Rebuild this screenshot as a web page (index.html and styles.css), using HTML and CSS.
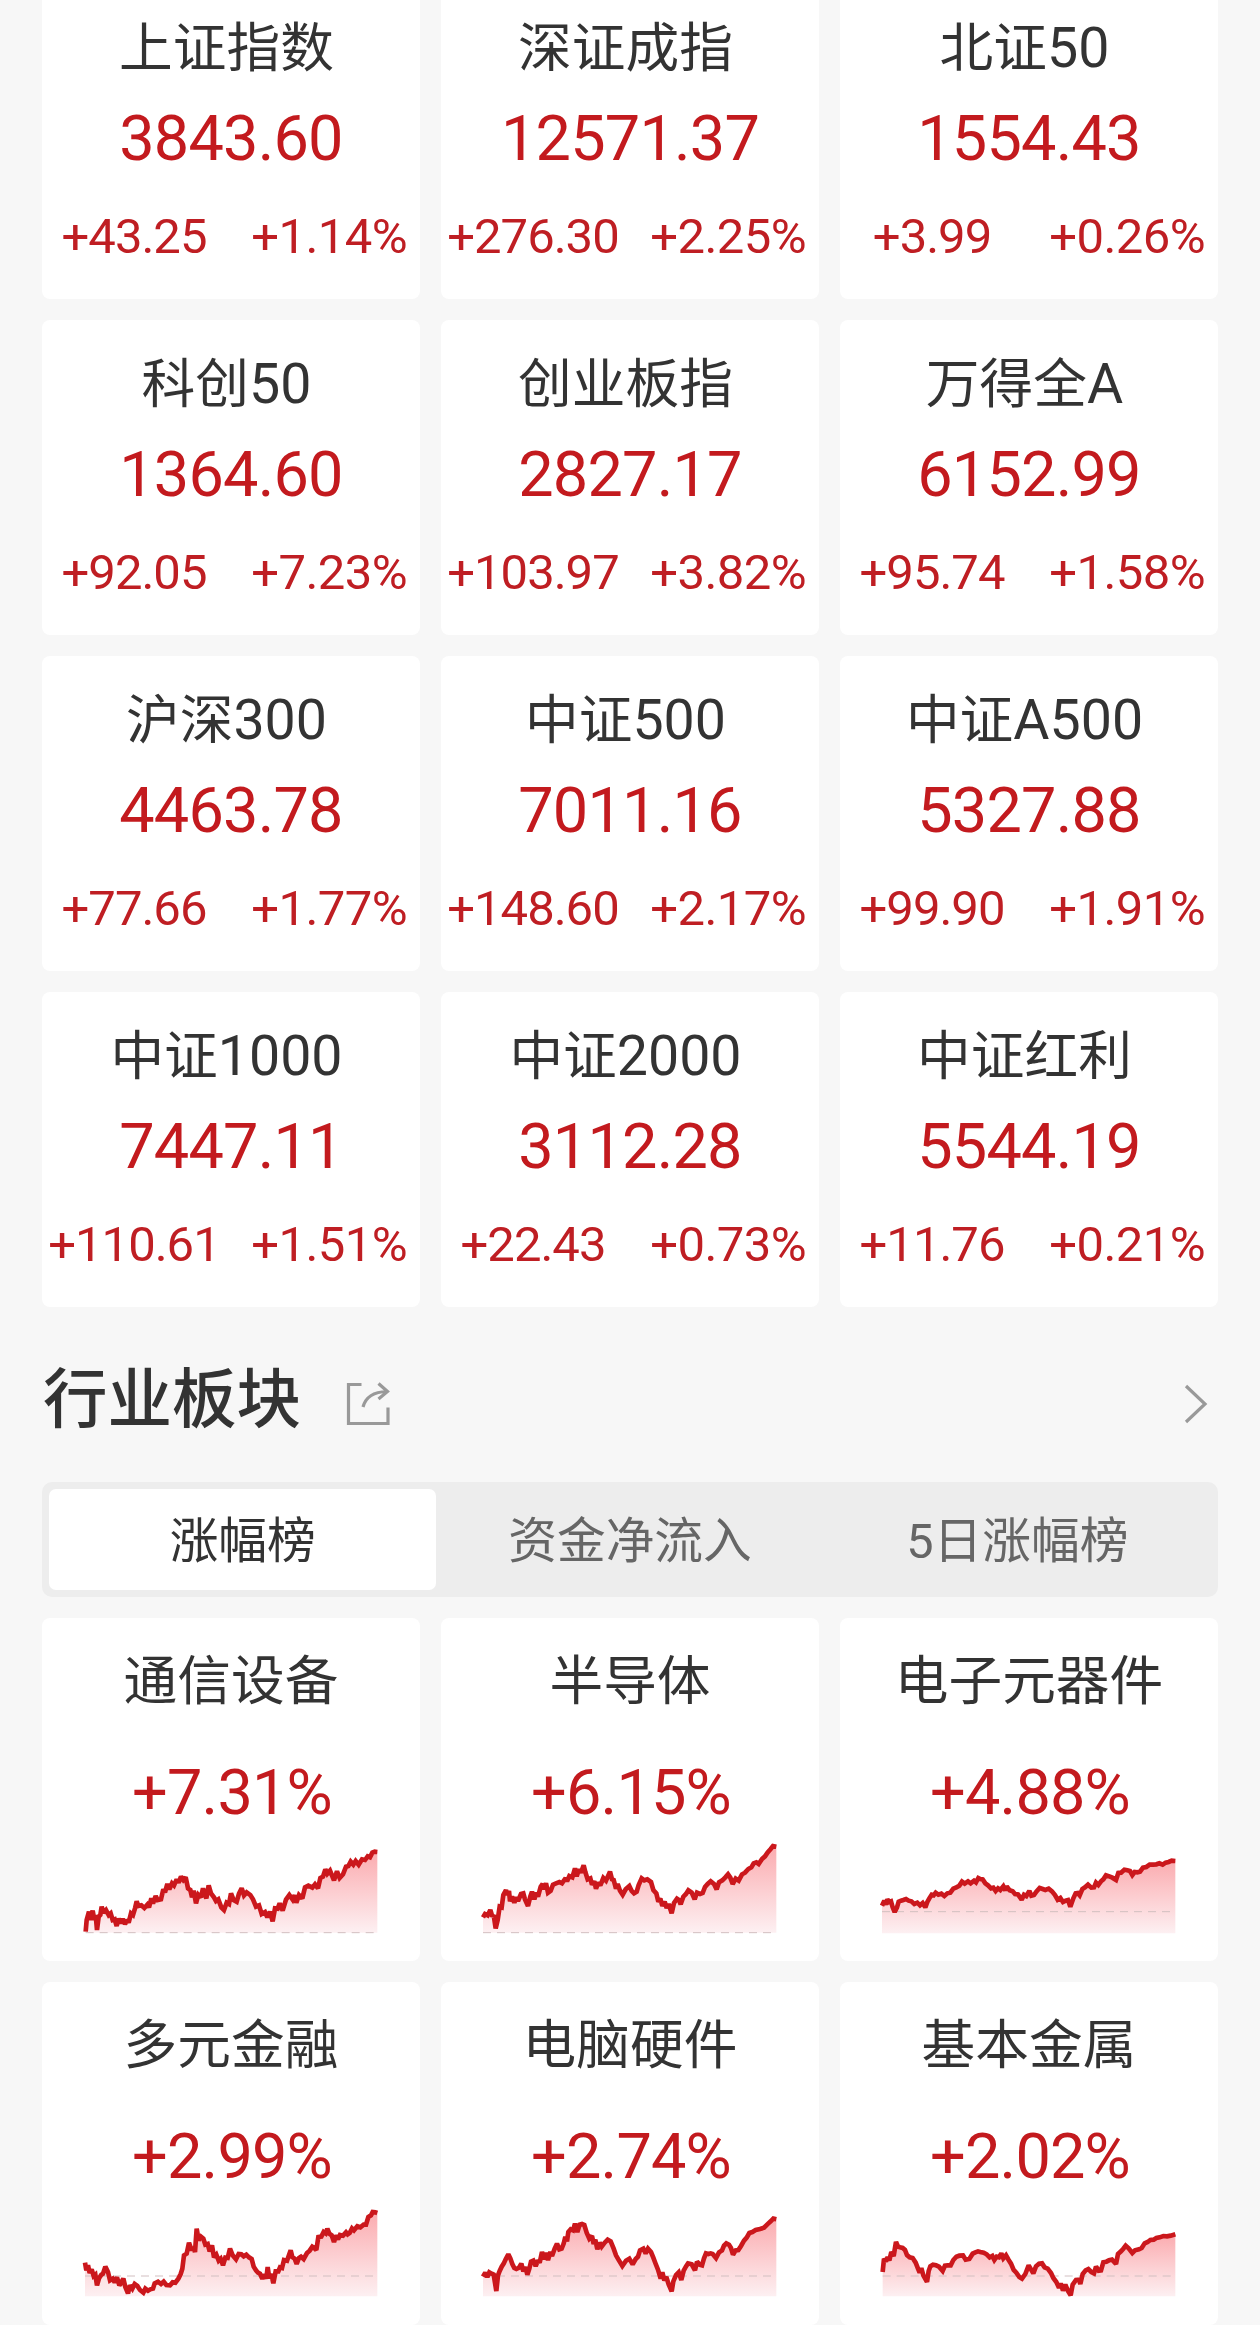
FILE: index.html
```html
<!DOCTYPE html>
<html lang="zh-CN">
<head>
<meta charset="utf-8">
<title>行情</title>
<link rel="stylesheet" href="styles.css">
</head>
<body>
<main class="page">
  <section class="grid indices">
    <article class="card index"><h3 class="name">上证指数</h3><p class="value">3843.60</p><p class="change"><span>+43.25</span><span>+1.14%</span></p></article>
    <article class="card index"><h3 class="name">深证成指</h3><p class="value">12571.37</p><p class="change"><span>+276.30</span><span>+2.25%</span></p></article>
    <article class="card index"><h3 class="name">北证<b>50</b></h3><p class="value">1554.43</p><p class="change"><span>+3.99</span><span>+0.26%</span></p></article>
    <article class="card index"><h3 class="name">科创<b>50</b></h3><p class="value">1364.60</p><p class="change"><span>+92.05</span><span>+7.23%</span></p></article>
    <article class="card index"><h3 class="name">创业板指</h3><p class="value">2827.17</p><p class="change"><span>+103.97</span><span>+3.82%</span></p></article>
    <article class="card index"><h3 class="name">万得全<b>A</b></h3><p class="value">6152.99</p><p class="change"><span>+95.74</span><span>+1.58%</span></p></article>
    <article class="card index"><h3 class="name">沪深<b>300</b></h3><p class="value">4463.78</p><p class="change"><span>+77.66</span><span>+1.77%</span></p></article>
    <article class="card index"><h3 class="name">中证<b>500</b></h3><p class="value">7011.16</p><p class="change"><span>+148.60</span><span>+2.17%</span></p></article>
    <article class="card index"><h3 class="name">中证<b>A500</b></h3><p class="value">5327.88</p><p class="change"><span>+99.90</span><span>+1.91%</span></p></article>
    <article class="card index"><h3 class="name">中证<b>1000</b></h3><p class="value">7447.11</p><p class="change"><span>+110.61</span><span>+1.51%</span></p></article>
    <article class="card index"><h3 class="name">中证<b>2000</b></h3><p class="value">3112.28</p><p class="change"><span>+22.43</span><span>+0.73%</span></p></article>
    <article class="card index"><h3 class="name">中证红利</h3><p class="value">5544.19</p><p class="change"><span>+11.76</span><span>+0.21%</span></p></article>
  </section>

  <header class="heading">
    <h2>行业板块</h2>
    <svg class="share" width="44" height="44" viewBox="0 0 44 44"><path d="M15.5 2.5H2.5V41.500H42V25.500M17 25Q21 10 41 9.500M32.500 1.500L41.500 9.500L32.500 17"/></svg>
    <svg class="chevron" width="24" height="40" viewBox="0 0 24 40"><path d="M2 2L21 20L2 38"/></svg>
  </header>

  <nav class="tabs"><span class="tab active">涨幅榜</span><span class="tab">资金净流入</span><span class="tab">5日涨幅榜</span></nav>

  <section class="grid sectors">
    <article class="card sector"><h3 class="name">通信设备</h3><p class="value">+7.31%</p>
      <svg class="spark" viewBox="3 0 1020 450" data-base="338" data-bottom="338" data-points="77,335 80,300 87,275 91,300 98,272 103,300 107,285 111,330 116,290 121,285 125,260 131,278 138,270 146,285 152,280 158,300 164,298 170,318 176,296 182,310 188,297 195,312 202,300 206,308 213,280 219,285 225,265 230,244 235,258 244,256 253,264 262,254 267,262 274,235 279,250 287,228 293,240 303,238 310,208 315,217 322,192 328,208 336,190 342,196 350,178 356,188 363,170 370,180 377,172 384,205 391,210 396,232 401,212 408,250 415,224 423,232 429,205 435,224 439,235 446,196 453,220 462,232 468,243 475,238 484,262 492,270 500,248 507,252 513,220 521,240 530,245 537,221 545,205 552,226 560,217 571,225 579,238 588,260 597,256 605,282 615,276 622,292 630,275 638,304 645,265 653,266 659,250 668,272 678,239 688,225 698,239 704,226 709,248 717,225 727,235 735,202 745,197 757,203 765,193 774,205 781,174 789,170 796,148 802,161 810,152 822,181 831,154 839,174 849,163 858,140 865,138 872,125 880,134 887,123 896,134 906,118 915,120 923,109 930,112 937,98 944,95 952,96"/></article>
    <article class="card sector"><h3 class="name">半导体</h3><p class="value">+6.15%</p>
      <svg class="spark" viewBox="0 0 1020 450" data-base="338" data-bottom="338" data-points="69,292 75,282 83,286 91,270 97,290 101,285 107,325 113,300 119,260 125,262 130,225 138,210 142,225 147,213 150,244 156,230 163,248 169,232 174,243 183,222 190,220 195,238 204,258 211,229 216,215 223,238 229,218 234,230 242,200 248,192 252,208 258,190 264,218 272,212 279,194 288,190 298,186 306,190 317,174 321,184 328,168 337,172 345,145 350,169 357,148 363,158 371,136 376,156 383,178 391,175 396,194 403,184 408,206 415,188 421,196 430,174 438,182 450,155 456,178 461,180 468,206 473,192 480,212 488,224 497,208 508,198 515,213 522,220 530,215 536,195 545,175 553,181 562,178 573,186 580,210 589,220 595,245 601,236 607,258 614,245 620,264 626,252 635,280 642,249 651,236 657,240 662,253 670,230 678,222 685,211 695,218 704,238 711,218 720,222 728,219 735,201 743,192 752,184 762,192 770,208 777,187 787,181 796,172 804,163 811,173 818,192 827,176 836,182 846,163 855,158 865,147 874,142 881,130 889,127 896,132 906,117 915,109 923,97 932,87 939,78 949,80"/></article>
    <article class="card sector"><h3 class="name">电子元器件</h3><p class="value">+4.88%</p>
      <svg class="spark" viewBox="-3 0 1020 450" data-base="275" data-bottom="340" data-points="66,257 73,242 78,254 82,238 88,246 93,244 98,262 104,276 111,262 116,245 123,242 130,240 138,237 146,242 154,244 163,252 172,248 180,256 188,249 196,262 202,246 208,235 215,224 221,226 227,218 235,224 244,221 253,228 262,220 271,218 280,206 289,202 298,197 306,185 314,191 324,184 332,190 342,182 348,187 355,174 361,177 368,178 376,190 384,196 393,205 400,203 407,213 414,205 421,210 430,199 436,211 440,199 449,211 458,214 465,222 474,223 485,239 492,224 499,228 508,213 514,227 522,225 529,215 539,204 548,207 556,210 566,206 576,214 585,225 593,239 601,234 609,246 617,242 624,240 631,260 640,235 647,220 653,219 659,226 667,207 675,202 684,194 694,203 702,202 708,188 715,195 723,184 730,178 738,166 748,169 757,173 768,180 775,159 783,158 793,149 802,151 810,153 817,165 824,156 832,157 840,155 849,143 859,141 869,134 879,134 889,133 898,130 908,134 917,128 926,126 935,122 946,123"/></article>
    <article class="card sector"><h3 class="name">多元金融</h3><p class="value">+2.99%</p>
      <svg class="spark" viewBox="3 -4 1020 450" data-base="272" data-bottom="333" data-points="75,232 79,255 84,240 89,263 95,252 101,272 106,268 111,300 117,279 124,268 129,265 136,244 144,260 150,285 158,280 164,291 171,276 178,300 184,292 190,280 196,305 204,324 210,300 217,310 224,296 232,302 240,314 250,322 256,310 264,316 271,312 279,310 284,294 294,289 303,296 311,289 319,299 330,300 338,291 346,292 355,280 362,266 367,250 372,210 380,205 387,172 395,195 400,185 405,200 410,130 416,165 423,154 430,160 436,178 443,176 449,198 456,180 462,216 469,208 476,226 482,220 489,240 496,217 503,218 510,190 518,210 528,222 536,206 544,207 551,213 559,208 567,216 575,221 581,244 588,255 594,262 600,265 607,280 614,268 619,280 623,245 628,279 634,266 640,294 647,258 655,258 660,246 666,248 672,224 681,226 692,195 697,215 704,220 710,236 717,218 723,214 731,221 741,203 749,196 757,184 763,188 769,194 775,155 784,154 791,140 797,144 802,130 808,145 815,150 822,170 828,150 834,162 840,149 849,151 858,141 863,147 869,143 876,129 882,135 892,123 901,126 911,118 918,118 925,95 933,90 938,80 946,81 952,83"/></article>
    <article class="card sector"><h3 class="name">电脑硬件</h3><p class="value">+2.74%</p>
      <svg class="spark" viewBox="0 -4 1020 450" data-base="272" data-bottom="333" data-points="69,274 76,262 82,275 88,261 95,265 101,268 109,317 114,270 119,257 125,244 131,235 137,222 145,207 151,219 157,236 163,248 169,251 177,247 184,235 190,258 196,245 202,268 208,250 213,229 220,226 227,242 234,225 239,232 246,200 253,222 257,202 264,224 271,200 276,212 284,190 291,175 298,192 305,190 311,175 316,154 321,168 325,140 332,132 339,135 345,115 352,140 359,118 366,116 373,119 380,142 388,160 396,152 401,176 406,163 412,192 419,172 425,184 434,172 443,163 452,168 461,190 468,210 475,222 487,242 498,226 508,220 518,237 527,221 534,214 540,195 550,190 557,204 564,190 573,200 580,217 586,233 594,253 602,280 607,261 613,285 619,275 626,297 635,318 640,288 648,269 656,261 664,284 671,256 678,243 684,234 695,237 705,255 711,229 719,238 726,240 732,219 738,204 745,206 752,204 758,206 768,218 777,201 786,195 792,181 799,174 807,178 813,188 819,208 827,195 835,194 843,182 852,166 860,157 868,143 877,140 887,134 900,131 912,127 922,117 932,108 940,100 949,102"/></article>
    <article class="card sector"><h3 class="name">基本金属</h3><p class="value">+2.02%</p>
      <svg class="spark" viewBox="-3 -4 1020 450" data-base="272" data-bottom="333" data-points="68,260 72,220 78,228 83,215 88,225 94,200 101,212 108,170 114,184 120,186 128,188 135,194 141,209 149,216 158,218 167,232 174,250 179,262 184,248 190,270 201,290 206,257 211,243 219,238 228,240 237,244 248,257 255,241 263,240 272,240 280,224 289,214 298,211 309,210 317,223 328,221 338,205 346,201 354,198 361,200 371,202 380,207 389,216 397,212 403,224 410,214 417,216 424,204 430,219 438,210 446,224 453,235 461,254 469,262 478,275 486,280 496,266 506,240 513,252 520,264 528,243 537,235 546,234 554,246 563,250 573,263 580,278 589,290 597,307 602,294 609,316 616,298 624,317 632,330 638,298 648,284 657,283 661,296 668,266 677,255 685,251 694,260 702,264 708,244 716,256 723,255 730,231 739,229 747,225 756,223 768,236 774,206 783,198 790,190 797,181 806,189 817,203 825,195 837,192 845,188 854,174 863,170 871,164 881,163 889,158 899,156 910,152 921,153 932,151 946,147"/></article>
  </section>
</main>
<script src="spark.js"></script>
</body>
</html>
```
FILE: styles.css
```css
* { box-sizing: border-box; margin: 0; padding: 0; }

body {
  background: #f7f7f7;
  color: #333;
  font-family: Roboto, "Noto Sans CJK SC", sans-serif;
}

.page { height: 2325px; overflow: hidden; padding: 0 42px; }

.grid { display: grid; grid-template-columns: repeat(3, 378px); gap: 21px; }
.indices { margin-top: -16px; }

.card { background: #fff; border-radius: 8px; text-align: center; }
.index { height: 315px; padding-top: 30px; }
.sector { height: 343px; padding-top: 29px; }

.name { font-size: 53.7px; font-weight: 400; line-height: 70px; white-space: nowrap; }
.name b { font-size: 55.5px; font-weight: 400; line-height: 1; }
.index .name { padding-right: 9px; }

.value { color: #c31a1e; font-size: 63px; line-height: 60px; letter-spacing: -0.8px; }
.index .value { margin-top: 25px; }
.sector .value { margin-top: 46px; padding-left: 2px; }

.change {
  display: grid;
  grid-template-columns: 184px 1fr;
  margin-top: 43px;
  padding-right: 13px;
  color: #bf1e23;
  font-size: 49px;
  line-height: 50px;
  letter-spacing: -1px;
  white-space: nowrap;
}
.change span { justify-self: center; }
.change span:last-child { justify-self: end; letter-spacing: -0.6px; }

.heading { display: flex; align-items: center; height: 175px; padding: 10px 10px 0 1px; }
.heading h2 { font-size: 64.5px; font-weight: 500; line-height: 80px; }
.heading svg { fill: none; stroke: #999; stroke-width: 3.2; }
.share { margin: 9px 0 0 45px; }
.chevron { margin: 9px 0 0 auto; }

.tabs {
  display: flex;
  height: 115px;
  margin-bottom: 21px;
  padding: 7px;
  border-radius: 10px;
  background: #ededed;
}
.tab { flex: 1; padding-top: 2px; color: #666; font-size: 48.7px; line-height: 101px; text-align: center; }
.tab.active { background: #fff; border-radius: 7px; color: #333; }

.spark { display: block; width: 340px; height: 150px; margin: -3px 19px 0; }
.spark .line { fill: none; stroke: #cb171c; stroke-width: 14; stroke-linejoin: miter; stroke-miterlimit: 2; }
.spark .base { stroke: #d2bfc1; stroke-width: 3; stroke-dasharray: 24 18; }
```
FILE: spark.js
```js
const NS = 'http://www.w3.org/2000/svg';

function add(parent, tag, attrs) {
  const el = document.createElementNS(NS, tag);
  for (const key in attrs) el.setAttribute(key, attrs[key]);
  parent.appendChild(el);
  return el;
}

document.querySelectorAll('.spark').forEach((svg, i) => {
  const { points, base, bottom } = svg.dataset;
  const list = points.split(' ');
  const first = list[0].split(',')[0];
  const last = list[list.length - 1].split(',')[0];

  const fade = add(svg, 'linearGradient', { id: 'fade' + i, x1: 0, y1: 0, x2: 0, y2: 1 });
  add(fade, 'stop', { offset: 0, 'stop-color': '#fbabaf' });
  add(fade, 'stop', { offset: 1, 'stop-color': '#fdf0f2' });

  add(svg, 'polygon', { points: `${first},${bottom} ${points} ${last},${bottom}`, fill: `url(#fade${i})` });
  add(svg, 'line', { class: 'base', x1: first, x2: last, y1: base, y2: base });
  add(svg, 'polyline', { class: 'line', points });
});
```
